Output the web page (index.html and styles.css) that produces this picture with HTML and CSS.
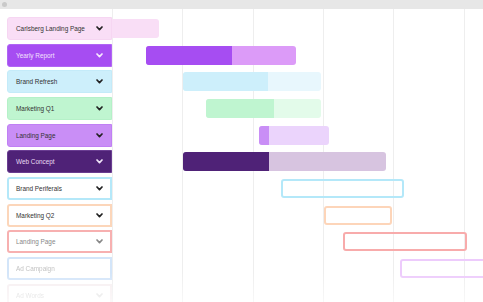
FILE: index.html
```html
<!DOCTYPE html>
<html lang="en">
<head>
<meta charset="UTF-8">
<meta name="viewport" content="width=device-width, initial-scale=1.0">
<title>Project Timeline</title>
<link rel="stylesheet" href="styles.css">
</head>
<body>

<div class="topbar"><span class="dot"></span></div>

<div class="board">

  <!-- task labels -->
  <div class="labels">
    <div class="card pink">Carlsberg Landing Page<svg class="chev" viewBox="0 0 7 5"><polyline points="1,1 3.5,3.6 6,1"/></svg></div>
    <div class="card violet">Yearly Report<svg class="chev" viewBox="0 0 7 5"><polyline points="1,1 3.5,3.6 6,1"/></svg></div>
    <div class="card sky">Brand Refresh<svg class="chev" viewBox="0 0 7 5"><polyline points="1,1 3.5,3.6 6,1"/></svg></div>
    <div class="card mint">Marketing Q1<svg class="chev" viewBox="0 0 7 5"><polyline points="1,1 3.5,3.6 6,1"/></svg></div>
    <div class="card lilac">Landing Page<svg class="chev" viewBox="0 0 7 5"><polyline points="1,1 3.5,3.6 6,1"/></svg></div>
    <div class="card plum">Web Concept<svg class="chev" viewBox="0 0 7 5"><polyline points="1,1 3.5,3.6 6,1"/></svg></div>
    <div class="card outline line-sky">Brand Periferals<svg class="chev" viewBox="0 0 7 5"><polyline points="1,1 3.5,3.6 6,1"/></svg></div>
    <div class="card outline line-peach">Marketing Q2<svg class="chev" viewBox="0 0 7 5"><polyline points="1,1 3.5,3.6 6,1"/></svg></div>
    <div class="card outline line-salmon">Landing Page<svg class="chev" viewBox="0 0 7 5"><polyline points="1,1 3.5,3.6 6,1"/></svg></div>
    <div class="card outline line-blue">Ad Campaign</div>
    <div class="card outline line-faint">Ad Words<svg class="chev" viewBox="0 0 7 5"><polyline points="1,1 3.5,3.6 6,1"/></svg></div>
  </div>

  <!-- gantt tracks -->
  <div class="tracks">
    <div class="track"><div class="bar pink first" style="margin-left:0;width:47px"></div></div>
    <div class="track"><div class="bar violet" style="margin-left:34px;width:150.3px"><span class="done" style="width:86.6px"></span></div></div>
    <div class="track"><div class="bar sky" style="margin-left:71px;width:138px"><span class="done" style="width:85.6px"></span></div></div>
    <div class="track"><div class="bar mint" style="margin-left:94.3px;width:114.7px"><span class="done" style="width:68.3px"></span></div></div>
    <div class="track"><div class="bar lilac" style="margin-left:147.6px;width:69.7px"><span class="done" style="width:10px"></span></div></div>
    <div class="track"><div class="bar plum" style="margin-left:71px;width:203.3px"><span class="done" style="width:86.6px"></span></div></div>
    <div class="track"><div class="bar line-sky" style="margin-left:169px;width:123.6px"></div></div>
    <div class="track"><div class="bar line-peach" style="margin-left:212.6px;width:67.7px"></div></div>
    <div class="track"><div class="bar line-salmon" style="margin-left:231px;width:124px"></div></div>
    <div class="track"><div class="bar line-lav" style="margin-left:288.3px;width:90px"></div></div>
    <div class="track"></div>
  </div>

</div>

</body>
</html>
```

FILE: styles.css
```css
/* —— RESET —— */
*{box-sizing:border-box;margin:0;padding:0}
html,body{height:100%;background:#fff;overflow:hidden;
  font-family:"Liberation Sans",Arial,sans-serif}

/* —— WINDOW BAR —— */
.topbar{height:9px;background:#e7e7e7;display:flex;align-items:center;padding-left:2px}
.dot{width:5px;height:5px;border-radius:50%;background:#c9c9c9}

/* —— BOARD —— */
.board{display:flex;height:calc(100% - 9px);
  -webkit-mask-image:linear-gradient(to bottom,#000 90%,rgba(0,0,0,.45) 100%);
          mask-image:linear-gradient(to bottom,#000 90%,rgba(0,0,0,.45) 100%)}
.labels{width:111.7px;flex:none;padding:8px 0 0 7px;
  display:flex;flex-direction:column;gap:3.67px}
.tracks{flex:1;padding-top:8px;display:flex;flex-direction:column;gap:3.67px;overflow:hidden;
  background-image:repeating-linear-gradient(to right,#eeeeee 0 1px,transparent 1px 70.33px)}

/* —— LABEL CARDS —— */
.card{height:23px;flex:none;display:flex;align-items:center;justify-content:space-between;
  padding:0 8px;border:1px solid transparent;border-radius:3px 0 0 3px;
  font-size:6.4px;color:#333;white-space:nowrap}
.card.outline{padding:0 7px;background:#fff;border-width:2px;border-style:solid}
.chev{width:7px;height:5px;fill:none;stroke:#222;stroke-width:1.7;stroke-linecap:round;stroke-linejoin:round}

/* —— TRACK ROWS —— */
.track{height:23px;flex:none;display:flex;align-items:center}
.bar{height:19px;flex:none;border-radius:3px;display:flex;overflow:hidden;border:2px solid transparent}
.bar.first{border-radius:0 3px 3px 0}
.done{display:block;height:100%}

/* —— PALETTE —— */
.card.pink{background:#f9def6;border-color:#f6d6f2}
.bar.pink{background:#f9def6;border:0}

.card.violet{background:#a64df2;border-color:#b066f4;color:#f3e2fd}
.card.violet .chev{stroke:#f6eafd}
.bar.violet{background:#dc9bf8;border:0}
.bar.violet .done{background:#a64df2}

.card.sky{background:#cdeffb;border-color:#c4ebf9}
.bar.sky{background:#e8f7fd;border:0}
.bar.sky .done{background:#cdeffb}

.card.mint{background:#bff5d0;border-color:#b5f1c8}
.bar.mint{background:#e3fbea;border:0}
.bar.mint .done{background:#bff5d0}

.card.lilac{background:#c98ef6;border-color:#c080f4}
.bar.lilac{background:#ebd4fc;border:0}
.bar.lilac .done{background:#c98ef6}

.card.plum{background:#4f2277;border-color:#6a3d92;color:#e9dbf3}
.card.plum .chev{stroke:#efe4f7}
.bar.plum{background:#d7c4e0;border:0}
.bar.plum .done{background:#4f2277}

.card.line-sky{border-color:#b4e8f9}
.bar.line-sky{border-color:#b4e8f9}

.card.line-peach{border-color:#fcd6ba}
.bar.line-peach{border-color:#fdd5b9}

.card.line-salmon{border-color:#f7b0b0;color:#888}
.card.line-salmon .chev{stroke:#888}
.bar.line-salmon{border-color:#f8abab}

.card.line-blue{border-color:#d3e5f9;color:#c3c3c3}
.bar.line-lav{border-color:#edcbfc;border-radius:3px 0 0 3px}

.card.line-faint{border-color:#f6eef0;color:#d8d8d8}
.card.line-faint .chev{stroke:#e2e2e2}
```
